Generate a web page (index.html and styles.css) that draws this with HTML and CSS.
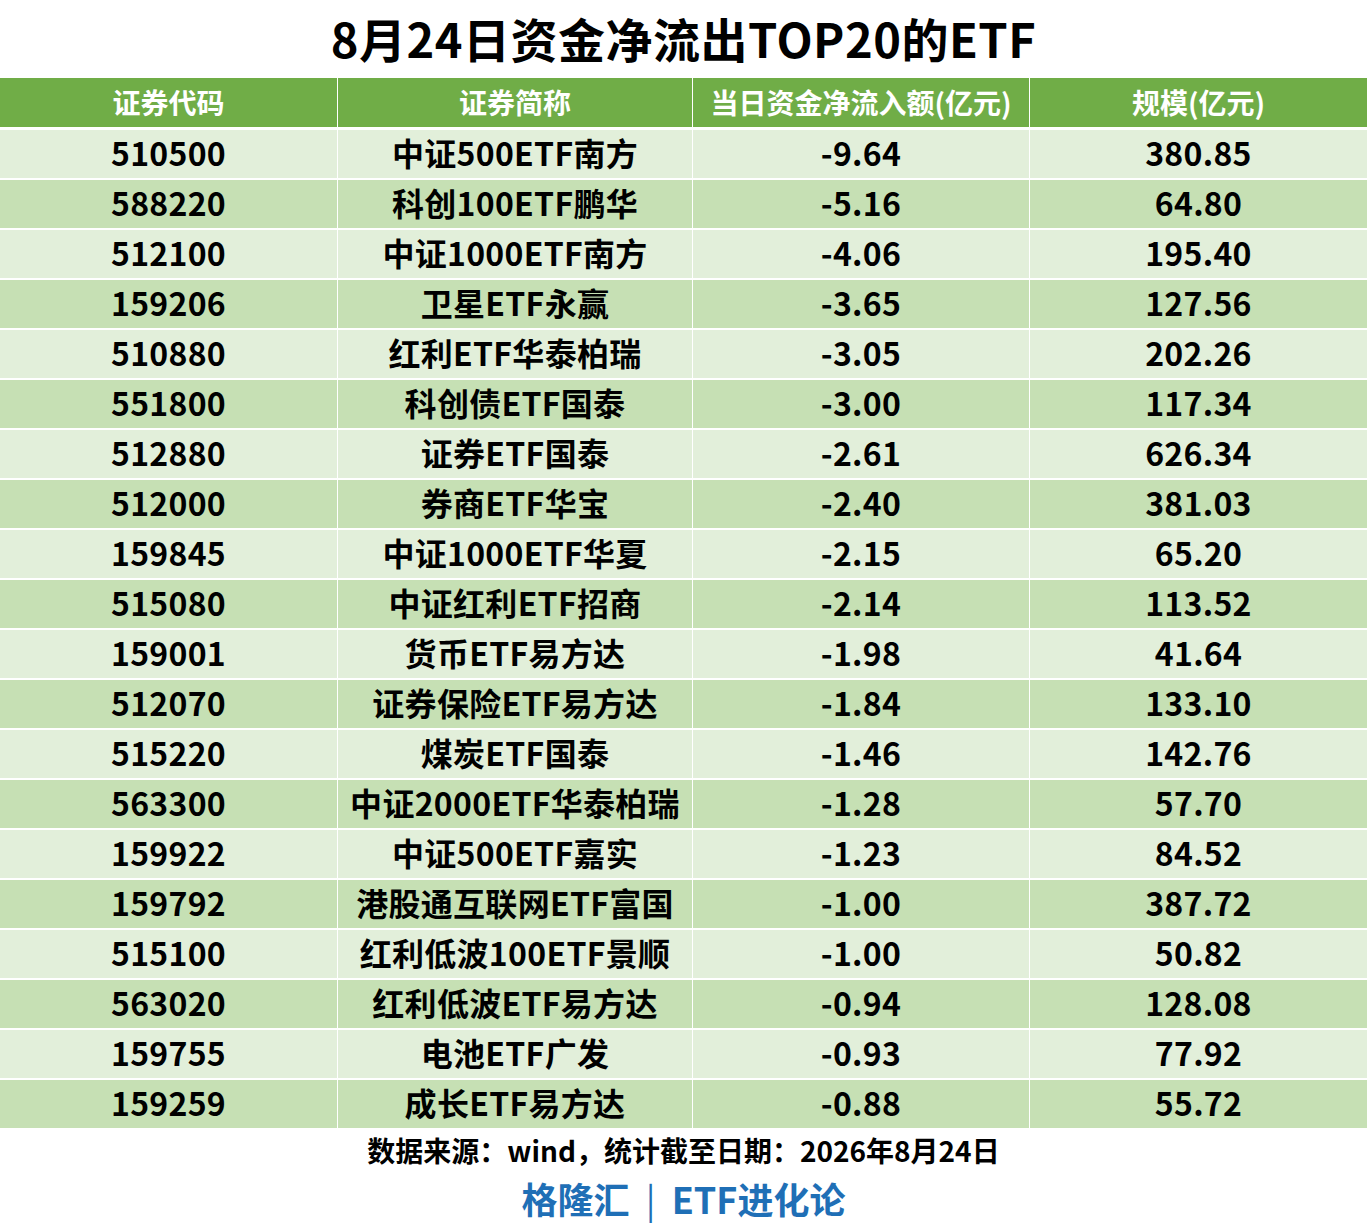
FILE: index.html
```html
<!DOCTYPE html>
<html lang="zh">
<head>
<meta charset="utf-8">
<title>8月24日资金净流出TOP20的ETF</title>
<link rel="stylesheet" href="styles.css">
</head>
<body>
<div class="page">
  <h1 class="title">8月24日资金净流出TOP20的ETF</h1>
  <div class="table">
    <div class="row head"><div>证券代码</div><div>证券简称</div><div>当日资金净流入额(亿元)</div><div>规模(亿元)</div></div>
    <div class="row odd"><div>510500</div><div>中证500ETF南方</div><div>-9.64</div><div>380.85</div></div>
    <div class="row even"><div>588220</div><div>科创100ETF鹏华</div><div>-5.16</div><div>64.80</div></div>
    <div class="row odd"><div>512100</div><div>中证1000ETF南方</div><div>-4.06</div><div>195.40</div></div>
    <div class="row even"><div>159206</div><div>卫星ETF永赢</div><div>-3.65</div><div>127.56</div></div>
    <div class="row odd"><div>510880</div><div>红利ETF华泰柏瑞</div><div>-3.05</div><div>202.26</div></div>
    <div class="row even"><div>551800</div><div>科创债ETF国泰</div><div>-3.00</div><div>117.34</div></div>
    <div class="row odd"><div>512880</div><div>证券ETF国泰</div><div>-2.61</div><div>626.34</div></div>
    <div class="row even"><div>512000</div><div>券商ETF华宝</div><div>-2.40</div><div>381.03</div></div>
    <div class="row odd"><div>159845</div><div>中证1000ETF华夏</div><div>-2.15</div><div>65.20</div></div>
    <div class="row even"><div>515080</div><div>中证红利ETF招商</div><div>-2.14</div><div>113.52</div></div>
    <div class="row odd"><div>159001</div><div>货币ETF易方达</div><div>-1.98</div><div>41.64</div></div>
    <div class="row even"><div>512070</div><div>证券保险ETF易方达</div><div>-1.84</div><div>133.10</div></div>
    <div class="row odd"><div>515220</div><div>煤炭ETF国泰</div><div>-1.46</div><div>142.76</div></div>
    <div class="row even"><div>563300</div><div>中证2000ETF华泰柏瑞</div><div>-1.28</div><div>57.70</div></div>
    <div class="row odd"><div>159922</div><div>中证500ETF嘉实</div><div>-1.23</div><div>84.52</div></div>
    <div class="row even"><div>159792</div><div>港股通互联网ETF富国</div><div>-1.00</div><div>387.72</div></div>
    <div class="row odd"><div>515100</div><div>红利低波100ETF景顺</div><div>-1.00</div><div>50.82</div></div>
    <div class="row even"><div>563020</div><div>红利低波ETF易方达</div><div>-0.94</div><div>128.08</div></div>
    <div class="row odd"><div>159755</div><div>电池ETF广发</div><div>-0.93</div><div>77.92</div></div>
    <div class="row even"><div>159259</div><div>成长ETF易方达</div><div>-0.88</div><div>55.72</div></div>
  </div>
  <p class="source">数据来源：wind，统计截至日期：2026年8月24日</p>
  <p class="brand">格隆汇 <span class="bar">|</span> ETF进化论</p>
</div>
</body>
</html>
```
FILE: styles.css
```css
html, body {
  margin: 0;
  padding: 0;
  background: #ffffff;
}
body {
  font-family: "Noto Sans CJK SC", "Noto Sans", sans-serif;
  color: #000;
}
.page {
  width: 1367px;
}
.title {
  margin: 0;
  height: 78px;
  line-height: 76px;
  text-align: center;
  font-size: 47px;
  font-weight: 700;
  letter-spacing: 0.5px;
}
.table {
  display: flex;
  flex-direction: column;
  gap: 2px;
}
.row {
  display: grid;
  grid-template-columns: 337px 354px 336px 337px;
  column-gap: 1px;
  height: 48px;
}
.row > div {
  display: flex;
  align-items: center;
  justify-content: center;
  font-size: 32px;
  font-weight: 700;
  line-height: 1;
  padding-bottom: 5px;
  letter-spacing: 0.3px;
}
.row.head {
  height: 49px;
  margin-bottom: 1px;
}
.row.head > div {
  background: #70ad47;
  color: #ffffff;
  font-size: 28px;
  font-weight: 700;
  padding-bottom: 2px;
  letter-spacing: 0;
}
.row.odd > div {
  background: #e2efda;
}
.row.even > div {
  background: #c6e0b4;
}
.source {
  margin: 0;
  padding-top: 3px;
  height: 42px;
  line-height: 38px;
  text-align: center;
  font-size: 28px;
  font-weight: 700;
}
.brand {
  margin: 0;
  text-align: center;
  font-size: 36px;
  line-height: 50px;
  font-weight: 700;
  color: #1f6fb6;
}
.brand .bar {
  font-weight: 400;
  padding: 0 8px;
}
```
